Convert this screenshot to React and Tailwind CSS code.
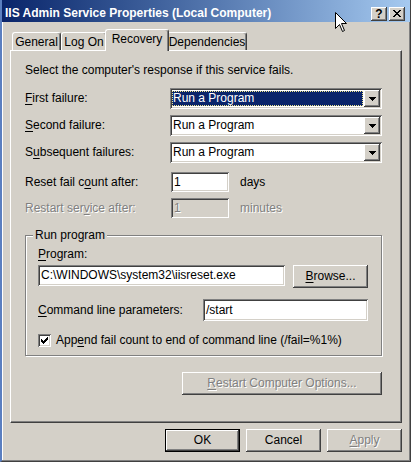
import React from "react";

// classic 3D bevels
const raised =
  "bg-[#d4d0c8] shadow-[inset_-1px_-1px_#404040,inset_1px_1px_#ffffff,inset_-2px_-2px_#808080,inset_2px_2px_#d4d0c8]";
const sunken =
  "shadow-[inset_1px_1px_#808080,inset_-1px_-1px_#ffffff,inset_2px_2px_#404040,inset_-2px_-2px_#d4d0c8]";
const grayText = "text-[#808080] [text-shadow:1px_1px_0_#ffffff]";

const Key = ({ children }) => <span className="underline underline-offset-[2px]">{children}</span>;

const Arrow = () => (
  <svg width="7" height="4" viewBox="0 0 7 4" shapeRendering="crispEdges">
    <path d="M0 0h7v1h-1v1h-1v1h-1v1h-1v-1h-1v-1h-1v-1h-1z" fill="#000" />
  </svg>
);

const Combo = ({ selected }) => (
  <div className={`w-[212px] h-[21px] bg-white ${sunken} p-[2px] flex`}>
    <div className="flex-1 flex items-center pr-[1px]">
      {selected ? (
        <span className="flex-1 h-[15px] bg-[#0a246a] text-white pl-[1px] flex items-center outline-1 outline-dotted outline-[#f0e68c] -outline-offset-1">
          Run a Program
        </span>
      ) : (
        <span className="pl-[1px]">Run a Program</span>
      )}
    </div>
    <div className={`w-[16px] h-full ${raised} flex items-center justify-center`}>
      <Arrow />
    </div>
  </div>
);

const Button = ({ children, disabled, isDefault, className = "" }) => (
  <div
    className={`h-[23px] flex items-center justify-center ${raised} ${
      isDefault ? "border border-black" : ""
    } ${disabled ? grayText : ""} ${className}`}
  >
    {children}
  </div>
);

const Tab = ({ children, width, active }) =>
  active ? (
    <div
      className={`${width} h-[22px] -mx-[2px] -mb-px relative z-10 bg-[#d4d0c8] border-t border-l border-white border-r border-r-[#404040] rounded-t-[3px] shadow-[inset_-1px_0_#808080] flex justify-center pt-[2px]`}
    >
      {children}
    </div>
  ) : (
    <div
      className={`${width} h-[18px] border-t border-l border-white border-r border-r-[#404040] rounded-t-[3px] shadow-[inset_-1px_0_#808080] flex justify-center pt-[2px]`}
    >
      {children}
    </div>
  );

export default function App() {
  return (
    <div className="relative w-[411px] h-[462px] overflow-hidden bg-[#d4d0c8] border-l-2 border-l-[#5b7fc0] border-r border-b border-r-[#404040] border-b-[#404040] shadow-[inset_-1px_-1px_#808080,inset_1px_0_#ffffff] font-['Liberation_Sans',Arial,sans-serif] text-[12px] leading-[15px] text-black select-none flex flex-col">
      {/* title bar */}
      <div className="h-[22px] shrink-0 flex items-center pt-[6px] pb-[1px] pl-[3px] pr-[5px] bg-linear-to-r from-[#0a246a] to-[#a6caf0]">
        <span className="flex-1 text-white font-bold text-[12px]">
          IIS Admin Service Properties (Local Computer)
        </span>
        <div className="flex gap-[2px]">
          <div className={`w-[16px] h-[14px] ${raised} flex items-center justify-center font-bold text-[12px] leading-none pt-px`}>
            ?
          </div>
          <div className={`w-[16px] h-[14px] ${raised} flex items-center justify-center`}>
            <svg width="8" height="7" viewBox="0 0 8 7" shapeRendering="crispEdges">
              <path
                d="M0 0h2v1h1v1h2v-1h1v-1h2v1h-1v1h-1v1h-1v1h1v1h1v1h1v1h-2v-1h-1v-1h-2v1h-1v1h-2v-1h1v-1h1v-1h1v-1h-1v-1h-1v-1h-1z"
                fill="#000"
              />
            </svg>
          </div>
        </div>
      </div>

      {/* tabs */}
      <div className="h-[28px] shrink-0 flex items-end pl-[10px]">
        <Tab width="w-[49px]">General</Tab>
        <Tab width="w-[46px]">Log On</Tab>
        <Tab width="w-[64px]" active>
          Recovery
        </Tab>
        <Tab width="w-[80px]">Dependencies</Tab>
      </div>

      {/* tab page */}
      <div className="mx-[8px] h-[373px] shrink-0 border-t border-l border-white border-r border-b border-r-[#404040] border-b-[#404040] shadow-[inset_-1px_-1px_#808080] pl-[14px] pr-[19px] pt-[12px] flex flex-col">
        <div>Select the computer's response if this service fails.</div>

        <div className="mt-[10px] flex items-center">
          <span className="w-[145px]">
            <Key>F</Key>irst failure:
          </span>
          <Combo selected />
        </div>
        <div className="mt-[6px] flex items-center">
          <span className="w-[145px]">
            <Key>S</Key>econd failure:
          </span>
          <Combo />
        </div>
        <div className="mt-[6px] flex items-center">
          <span className="w-[145px]">
            S<Key>u</Key>bsequent failures:
          </span>
          <Combo />
        </div>

        <div className="mt-[9px] flex items-center">
          <span className="w-[146px]">
            Reset fail c<Key>o</Key>unt after:
          </span>
          <div className={`w-[58px] h-[20px] bg-white ${sunken} flex items-center pl-[3px]`}>1</div>
          <span className="ml-[11px]">days</span>
        </div>
        <div className={`mt-[6px] flex items-center`}>
          <span className={`w-[146px] ${grayText}`}>
            Restart ser<Key>v</Key>ice after:
          </span>
          <div className={`w-[58px] h-[20px] bg-[#d4d0c8] ${sunken} flex items-center pl-[3px] ${grayText}`}>1</div>
          <span className={`ml-[11px] ${grayText}`}>minutes</span>
        </div>

        {/* group box */}
        <fieldset className="mt-[10px] border border-[#808080] shadow-[inset_1px_1px_#ffffff,1px_1px_#ffffff] pl-[12px] pr-[13px] pb-[7px]">
          <legend className="-ml-[5px] px-[2px] bg-[#d4d0c8]">Run program</legend>
          <div className="mt-[4px]">
            <Key>P</Key>rogram:
          </div>
          <div className="mt-[3px] flex items-start gap-[8px]">
            <div className={`w-[247px] h-[21px] bg-white ${sunken} flex items-center pl-[3px]`}>
              C:\WINDOWS\system32\iisreset.exe
            </div>
            <Button className="w-[75px]">
              <span>
                <Key>B</Key>rowse...
              </span>
            </Button>
          </div>
          <div className="mt-[11px] flex items-center justify-between">
            <span>
              <Key>C</Key>ommand line parameters:
            </span>
            <div className={`w-[165px] h-[22px] bg-white ${sunken} flex items-center pl-[3px]`}>/start</div>
          </div>
          <div className="mt-[12px] flex items-center">
            <div className={`w-[13px] h-[13px] bg-white ${sunken} flex items-center justify-center`}>
              <svg width="7" height="7" viewBox="0 0 7 7" shapeRendering="crispEdges">
                <path d="M6 0h1v3h-1v1h-1v1h-1v1h-1v1h-1v-1h-1v-1h-1v-3h1v1h1v1h1v-1h1v-1h1z" fill="#000" />
              </svg>
            </div>
            <span className="ml-[5px]">
              App<Key>e</Key>nd fail count to end of command line (/fail=%1%)
            </span>
          </div>
        </fieldset>

        <Button disabled className="mt-[16px] w-[200px] self-end">
          <span>
            <Key>R</Key>estart Computer Options...
          </span>
        </Button>
      </div>

      {/* dialog buttons */}
      <div className="mt-[6px] flex justify-end gap-[6px] pr-[8px]">
        <Button isDefault className="w-[75px]">
          OK
        </Button>
        <Button className="w-[75px]">Cancel</Button>
        <Button disabled className="w-[75px]">
          <span>
            <Key>A</Key>pply
          </span>
        </Button>
      </div>

      {/* mouse pointer */}
      <svg className="absolute left-[333px] top-[12px]" width="13" height="21" viewBox="0 0 13 21">
        <path d="M0.5 0.5V16.5L4.5 12.5L7.5 19.5L9.5 18.5L6.5 11.5H11.5Z" fill="#ffffff" stroke="#000000" />
      </svg>
    </div>
  );
}
